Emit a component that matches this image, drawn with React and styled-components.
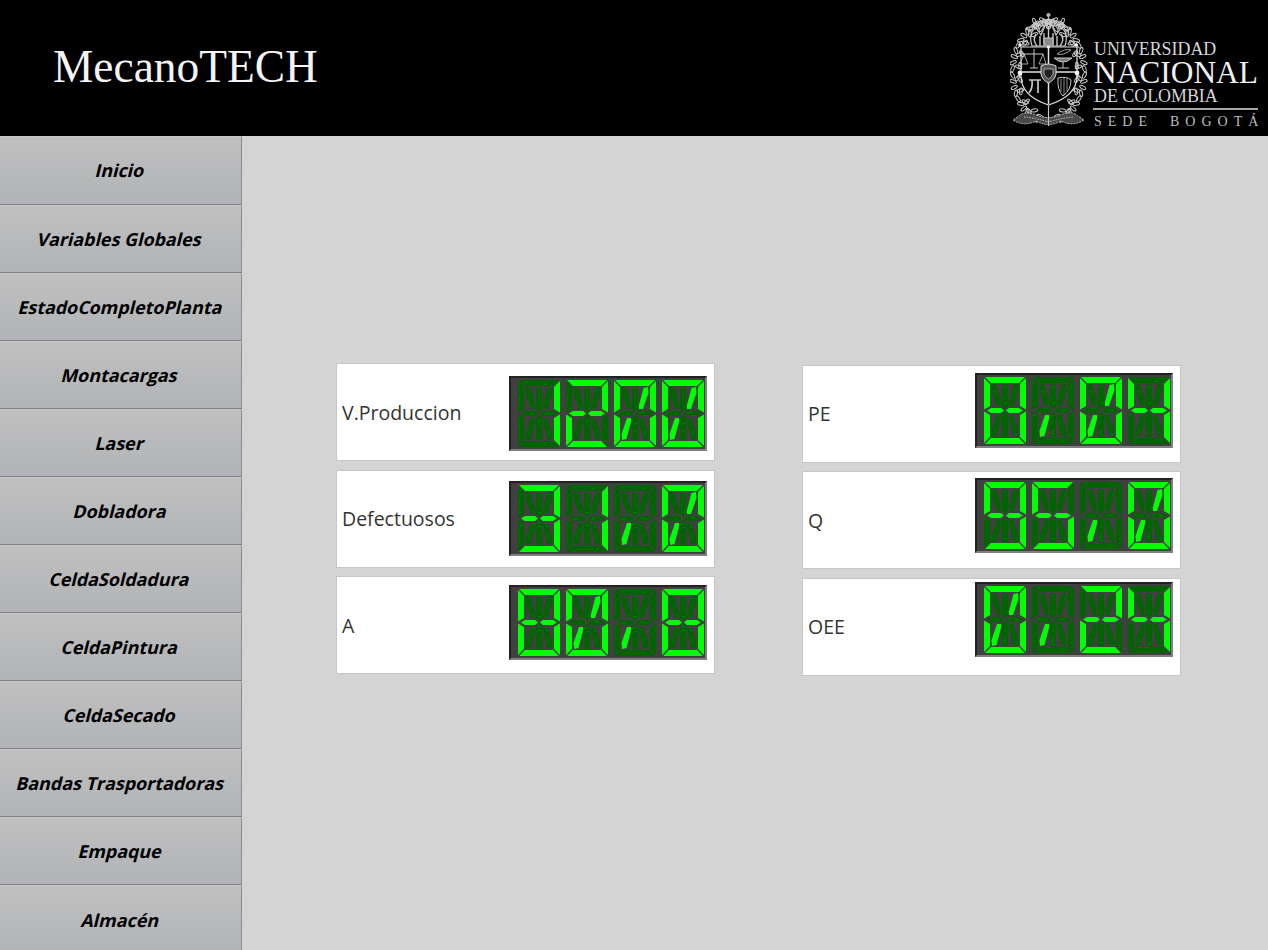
import styled, { createGlobalStyle } from 'styled-components';

const GlobalStyle = createGlobalStyle`
    html, body {
        margin: 0;
        padding: 0;
        height: 950px;
        overflow: hidden;
        background: #d4d4d4;
    }
`
const Page = styled.div`
    width: 1268px;
    height: 950px;
    overflow: hidden;
    display: flex;
    flex-direction: column;
`
const Header = styled.header`
    height: 136px;
    flex: none;
    background: #000;
    display: flex;
    justify-content: space-between;
    align-items: flex-start;
    padding: 0 10px 0 53px;
    box-sizing: border-box;
`
const Brand = styled.h1`
    margin: 38px 0 0;
    font: 400 45.4px/58px "Liberation Serif", serif;
    color: #f4f4f4;
`
const Logo = styled.div`
    display: flex;
    gap: 6px;
    margin-top: 12px;
`
const Crest = styled.svg`
    width: 78px;
    height: 115px;
    flex: none;
`
const LogoText = styled.div`
    display: flex;
    flex-direction: column;
    width: 164px;
    padding-top: 27px;
    font-family: "Liberation Serif", serif;
    color: #d6d6d6;
    white-space: nowrap;
`
const LogoSmall = styled.span`
    font-size: 17.9px;
    line-height: 20px;
`
const LogoBig = styled.span`
    font-size: 31.4px;
    line-height: 27px;
    color: #f0f0f0;
`
const LogoRule = styled.div`
    height: 2px;
    background: #a8a8a8;
    margin: 2px 0 4px -1px;
`
const LogoSede = styled.span`
    font-size: 14px;
    line-height: 16px;
    letter-spacing: 6px;
    word-spacing: 7.5px;
    color: #bdbdbd;
`
const Body = styled.div`
    flex: 1;
    display: flex;
    min-height: 0;
`
const Sidebar = styled.nav`
    width: 242px;
    flex: none;
    padding-top: 0.45px;
    display: flex;
    flex-direction: column;
`
const MenuButton = styled.a`
    height: 68.1px;
    flex: none;
    box-sizing: border-box;
    display: flex;
    align-items: center;
    justify-content: center;
    background: linear-gradient(#c0c0c0, #b1b3b6);
    border-top: 1px solid #c6c6c6;
    border-right: 1px solid #8c8c8c;
    border-bottom: 1px solid #7f7f7f;
`
const MenuLabel = styled.span`
    display: inline-block;
    transform: skewX(-14deg);
    font: 700 17.9px "Open Sans", sans-serif;
    color: #000;
`
const Content = styled.main`
    flex: 1;
    display: flex;
    align-items: flex-start;
    gap: 87.5px;
    padding: 227px 0 0 94px;
`
const Column = styled.section`
    width: 378.5px;
    display: flex;
    flex-direction: column;
    gap: 8.5px;
    margin-top: ${props => props.$top}px;
`
const Card = styled.div`
    height: 98px;
    box-sizing: border-box;
    background: #fff;
    border: 1px solid #c4c8cc;
    display: flex;
    justify-content: space-between;
    align-items: flex-start;
    padding: 0 7px 0 5px;
`
const Label = styled.span`
    align-self: center;
    font: 400 19.5px "Open Sans", sans-serif;
    color: #333;
`
const Display = styled.div`
    width: 198px;
    height: 75px;
    box-sizing: border-box;
    margin-top: ${props => props.$top}px;
    display: flex;
    gap: 6px;
    padding: 2px 0 0 7px;
    background: #404040;
    border: 2px solid;
    border-color: #222 #808080 #808080 #222;
`
const Digit = styled.svg`
    width: 42px;
    height: 67px;
    flex: none;
`

// 14 segment shapes, in a 42x67 cell
const SEGMENTS = {
    a: '1,0 41,0 35,6 7,6',
    d: '1,67 41,67 35,61 7,61',
    f: '0,1 6,7 6,29 0,32.5',
    e: '0,66 6,60 6,38 0,34.5',
    b: '42,1 36,7 36,29 42,32.5',
    c: '42,66 36,60 36,38 42,34.5',
    g1: '3,33.5 7,31 17,31 20,33.5 17,36 7,36',
    g2: '39,33.5 35,31 25,31 22,33.5 25,36 35,36',
    h: '13,29 17,29 17,25 12.5,8 8,7 7.5,13',
    j: '29,29 25,29 25,25 29.5,8 34,7 34.5,13',
    k: '13,38 17,38 17,42 12.5,59 8,60 7.5,54',
    m: '29,38 25,38 25,42 29.5,59 34,60 34.5,54',
    i: '18,8 24,8 24,29 21,32 18,29',
    l: '18,60 24,60 24,38 21,35 18,38',
}

const CHARS = {
    '0': 'a b c d e f j k',
    '1': 'b c',
    '2': 'a b d e g1 g2',
    '3': 'a b c d g1 g2',
    '4': 'b c f g1 g2',
    '5': 'a c d f g1 g2',
    '8': 'a b c d e f g1 g2',
    '9': 'a b c d f g1 g2',
    '/': 'k',
}

function Segments({ char }) {
    const lit = CHARS[char].split(' ')
    return (
        <Digit viewBox="0 0 42 67">
            {Object.entries(SEGMENTS).map(([name, points]) => (
                <polygon key={name} points={points} fill={lit.includes(name) ? '#00ff00' : '#006400'} />
            ))}
        </Digit>
    )
}

// wreath leaves on two rings round the shield, left half, the right half is mirrored
const LEAVES = []
for (let n = 0; n < 26; n++) {
    const t = Math.PI * (0.62 + n * 0.04)
    const x = 38.5 + Math.cos(t) * 36
    const y = 60 + Math.sin(-t) * -50
    LEAVES.push([x, y, (n * 47) % 180])
    LEAVES.push([x + 5 + (n % 3), y + (n % 2 ? 3 : -2), (n * 71 + 30) % 180])
}

function CrestDrawing() {
    return (
        <Crest viewBox="0 0 78 115" aria-hidden="true">
            <defs>
                <filter id="soft"><feGaussianBlur stdDeviation="0.4" /></filter>
            </defs>
            <g filter="url(#soft)" fill="none" stroke="#c8c8c8" strokeWidth="1">
                {LEAVES.map(([x, y, angle], index) => (
                    <g key={index}>
                        <ellipse cx={x} cy={y} rx="3.4" ry="1.5" transform={`rotate(${angle} ${x} ${y})`} />
                        <ellipse cx={77 - x} cy={y} rx="3.4" ry="1.5" transform={`rotate(${-angle} ${77 - x} ${y})`} />
                    </g>
                ))}
                {/* crown */}
                <path d="M22 34 Q18 20 26 16 L31 23 L38.5 6 L46 23 L51 16 Q59 20 55 34 Z" strokeWidth="1.2" />
                <path d="M26 22 Q22 28 27 34 M51 22 Q55 28 50 34 M30 34 V24 M34 34 V21 M38.5 34 V14 M43 34 V21 M47 34 V24" strokeWidth="1.4" />
                <path d="M34 26 H43 V31 Q38.5 38 34 31 Z" fill="#8a8a8a" />
                <circle cx="38.5" cy="3" r="1.6" fill="#aaa" />
                {/* shield */}
                <path d="M11 35 H67 V64 Q67 84 38.5 93 Q11 84 11 64 Z" stroke="#dcdcdc" strokeWidth="1.2" />
                <path d="M38.5 36 V92 M11 60 H67" stroke="#e4e4e4" strokeWidth="1.5" />
                <path d="M31 54 Q38.5 50 46 54 V62 Q45 68 38.5 71 Q32 68 31 62 Z" fill="#555" stroke="#ddd" />
                <path d="M34 57 H43 V62 Q42 65 38.5 67 Q35 65 34 62 Z" fill="#222" strokeWidth="0.7" />
                {/* balance */}
                <path d="M24 37 V56 M14 42 H33 M20 56 H28" strokeWidth="1" />
                <path d="M14 42 L10 52 H18 Z M33 42 L29 52 H36 Z" strokeWidth="0.8" />
                {/* cup and snake */}
                <path d="M44 46 Q53 54 62 46 Z M53 50 V56 M48 56 H59" fill="#777" />
                <path d="M47 42 Q55 36 61 38 Q53 44 47 42 Z" strokeWidth="0.8" />
                {/* pi */}
                <path d="M19 68 H31 M22 68 Q23 76 19 81 M28 68 V81" strokeWidth="1.7" />
                {/* harp */}
                <path d="M48 66 Q57 64 61 68 Q61 78 53 84 Q47 78 48 66 Z" strokeWidth="1" />
                <path d="M51 67 V80 M54 66 V83 M57 66 V79" strokeWidth="0.7" />
                {/* scroll */}
                <path d="M9 104 Q14 99 24 102 Q38 109 53 102 Q63 99 68 104 L74 108 Q63 115 51 109 Q38.5 116 26 109 Q14 115 3 108 Z" fill="#4a4a4a" strokeDasharray="2 1" />
                <path d="M14 105 Q26 106 38.5 110 Q51 106 63 105" strokeDasharray="1.5 1.2" />
                <path d="M38.5 93 V114" strokeWidth="1.2" />
            </g>
            <g filter="url(#soft)" fill="#f4f4f4">
                <circle cx="10" cy="61" r="2.4" />
                <circle cx="67" cy="61" r="2.4" />
                <circle cx="10" cy="33" r="1.8" />
                <circle cx="66" cy="33" r="1.8" />
                <circle cx="38.5" cy="35" r="1.6" />
            </g>
        </Crest>
    )
}

const MENU = [
    'Inicio', 'Variables Globales', 'EstadoCompletoPlanta', 'Montacargas', 'Laser', 'Dobladora',
    'CeldaSoldadura', 'CeldaPintura', 'CeldaSecado', 'Bandas Trasportadoras', 'Empaque', 'Almacén',
]

const LEFT = [
    { name: 'V.Produccion', value: '1200', top: 12 },
    { name: 'Defectuosos', value: '31/0', top: 10.5 },
    { name: 'A', value: '80/8', top: 8 },
]

const RIGHT = [
    { name: 'PE', value: '8/04', top: 7.5 },
    { name: 'Q', value: '95/0', top: 6 },
    { name: 'OEE', value: '0/24', top: 3.5 },
]

function Indicators({ rows, top }) {
    return (
        <Column $top={top}>
            {rows.map((row) => (
                <Card key={row.name}>
                    <Label>{row.name}</Label>
                    <Display $top={row.top}>
                        {row.value.split('').map((char, index) => (
                            <Segments key={index} char={char} />
                        ))}
                    </Display>
                </Card>
            ))}
        </Column>
    )
}

export default function App() {
    return (
        <Page>
            <GlobalStyle />
            <Header>
                <Brand>MecanoTECH</Brand>
                <Logo>
                    <CrestDrawing />
                    <LogoText>
                        <LogoSmall>UNIVERSIDAD</LogoSmall>
                        <LogoBig>NACIONAL</LogoBig>
                        <LogoSmall>DE COLOMBIA</LogoSmall>
                        <LogoRule />
                        <LogoSede>SEDE BOGOTÁ</LogoSede>
                    </LogoText>
                </Logo>
            </Header>
            <Body>
                <Sidebar>
                    {MENU.map((item) => (
                        <MenuButton key={item}>
                            <MenuLabel>{item}</MenuLabel>
                        </MenuButton>
                    ))}
                </Sidebar>
                <Content>
                    <Indicators rows={LEFT} top={0} />
                    <Indicators rows={RIGHT} top={1.5} />
                </Content>
            </Body>
        </Page>
    )
}
